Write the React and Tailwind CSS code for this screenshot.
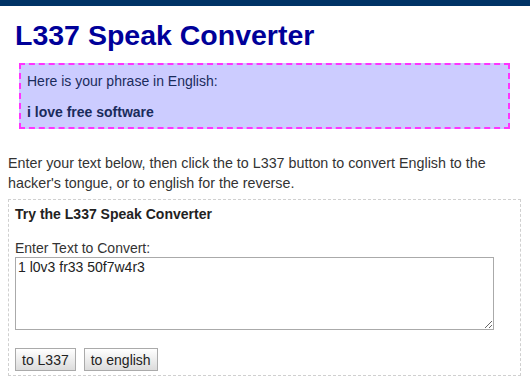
import React, { useState } from 'react';

const font = { fontFamily: '"Liberation Sans", Arial, sans-serif' };

export default function App() {
    const [text, setText] = useState('1 l0v3 fr33 50f7w4r3');

    return (
        <div className="w-[530px] h-[380px] bg-white overflow-hidden font-['Liberation_Sans',Arial,sans-serif] text-[#333]">
            {/* top strip */}
            <div className="h-[6px] bg-[#003366]"></div>

            <h1 className="pl-[15px] pt-[13px] text-[28.5px] leading-[32px] font-bold text-[#000099]">
                L337 Speak Converter
            </h1>

            {/* result box */}
            <div className="ml-[19px] mt-[12px] w-[491px] h-[66px] border-2 border-dashed border-[#ff33ff] bg-[#ccccff] px-[6px] pt-[6px] text-[14px] text-[#1a2b5c]">
                <p className="leading-[20px]">Here is your phrase in English:</p>
                <p className="mt-[11px] leading-[20px] font-bold">i love free software</p>
            </div>

            <p className="px-[8px] mt-[24px] text-[14.3px] leading-[20px] text-[#333]">
                Enter your text below, then click the to L337 button to convert English to the hacker's tongue, or to english for the reverse.
            </p>

            {/* converter form */}
            <div className="ml-[8px] mt-[6px] w-[513px] h-[177px] border border-dashed border-[#d0d0d0] px-[6px] pt-[4px]">
                <h2 className="text-[14px] leading-[20px] font-bold text-[#222]">Try the L337 Speak Converter</h2>
                <label className="block mt-[15px] text-[14px] leading-[18px] text-[#333]">Enter Text to Convert:</label>
                <textarea
                    value={text}
                    onChange={(e) => setText(e.target.value)}
                    className="block w-[479px] h-[73px] border border-[#aaa] px-[2px] py-0 text-[14px] leading-[18px] text-[#222] outline-none"
                    style={font}
                />
                <div className="flex gap-[8px] mt-[18px]">
                    <button className="h-[23px] px-[6px] border border-[#aaa] bg-gradient-to-b from-white to-[#dcdcdc] text-[14px] leading-[20px] text-[#222]">
                        to L337
                    </button>
                    <button className="h-[23px] px-[6px] border border-[#aaa] bg-gradient-to-b from-white to-[#dcdcdc] text-[14px] leading-[20px] text-[#222]">
                        to english
                    </button>
                </div>
            </div>
        </div>
    );
}
